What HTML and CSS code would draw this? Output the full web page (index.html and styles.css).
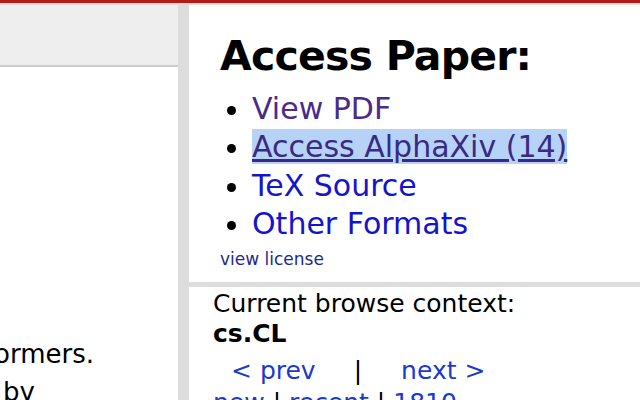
FILE: index.html
```html
<!DOCTYPE html>
<html>
<head>
<meta charset="utf-8">
<link rel="stylesheet" href="styles.css">
</head>
<body>
<div class="topbar"></div>
<div class="page">
  <div class="leftcol">
    <div class="lefthead"></div>
    <div class="abstract">
      <div class="abs-line abs-line-1">Bidirectional Encoder Representations from Transformers.</div>
      <div class="abs-line abs-line-2">representations from unlabeled text by</div>
    </div>
  </div>
  <div class="gutter"></div>
  <div class="rightcol">
    <div class="access">
      <h2 class="access-title">Access Paper:</h2>
      <ul class="access-list">
        <li><a class="visited" href="#">View PDF</a></li>
        <li><a class="visited selected" href="#">Access AlphaXiv (14)</a></li>
        <li><a class="link" href="#">TeX Source</a></li>
        <li><a class="link" href="#">Other Formats</a></li>
      </ul>
      <div class="license"><a href="#">view license</a></div>
    </div>
    <div class="hsep"></div>
    <div class="browse">
      <div class="browse-label">Current browse context:</div>
      <div class="browse-cat">cs.CL</div>
      <div class="browse-nav"><a href="#">&lt;&nbsp;prev</a><span class="pipe">|</span><a href="#">next&nbsp;&gt;</a></div>
      <div class="browse-more"><a class="plain" href="#">new</a> | <a class="plain" href="#">recent</a> | <a href="#">1810</a></div>
    </div>
  </div>
</div>
</body>
</html>
```
FILE: styles.css
```css
html, body {
  margin: 0;
  padding: 0;
  background: #ffffff;
  overflow: hidden;
  height: 400px;
}
body {
  font-family: "DejaVu Sans", "Liberation Sans", sans-serif;
  color: #000;
}
.topbar {
  height: 3px;
  background: #b31b1b;
  border-bottom: 2px solid #e3dcdc;
}
.page {
  display: flex;
  height: 395px;
}
.leftcol {
  width: 178px;
  flex: none;
  overflow: hidden;
}
.lefthead {
  height: 60px;
  background: #eeeeee;
  border-bottom: 2px solid #cccccc;
}
.abstract {
  padding-top: 268px;
  font-size: 26px;
  line-height: 38px;
}
.abs-line {
  display: flex;
  justify-content: flex-end;
  white-space: nowrap;
}
.abs-line-1 { padding-right: 84px; }
.abs-line-2 { padding-right: 143px; }
.gutter {
  width: 11px;
  flex: none;
  background: #dddddd;
}
.rightcol {
  flex: 1;
  display: flex;
  flex-direction: column;
  min-height: 0;
}
.access {
  flex: none;
  padding: 27px 0 0 31px;
  height: 250px;
}
.access-title {
  margin: 0;
  font-size: 41px;
  letter-spacing: -0.8px;
  line-height: 48px;
  font-weight: bold;
}
.access-list {
  margin: 10px 0 0 0;
  padding-left: 32px;
  font-size: 30px;
  line-height: 38.3px;
}
.access-list a { text-decoration: none; }
.access-list a.visited { color: #4a2a8c; }
.access-list a.link { color: #1414cc; }
.access-list a.selected {
  background: #b6d3f7;
  text-decoration: underline;
  color: #3a2a84;
}
.license {
  margin-top: 6px;
  font-size: 17px;
  line-height: 20px;
}
.license a { color: #1c2a8a; text-decoration: none; }
.hsep {
  flex: none;
  height: 5px;
  background: #dddddd;
}
.browse {
  flex: none;
  padding: 2px 0 0 24px;
  font-size: 25px;
  line-height: 30px;
}
.browse-cat { font-weight: bold; }
.browse-nav {
  margin-top: 7px;
  padding-left: 18px;
}
.browse-nav a, .browse-more a { color: #1a3acc; text-decoration: none; }
.pipe { margin: 0 39px 0 38px; }
.browse-more { margin-top: 2px; }
.browse-more a.plain { color: #1a3acc; }
```
